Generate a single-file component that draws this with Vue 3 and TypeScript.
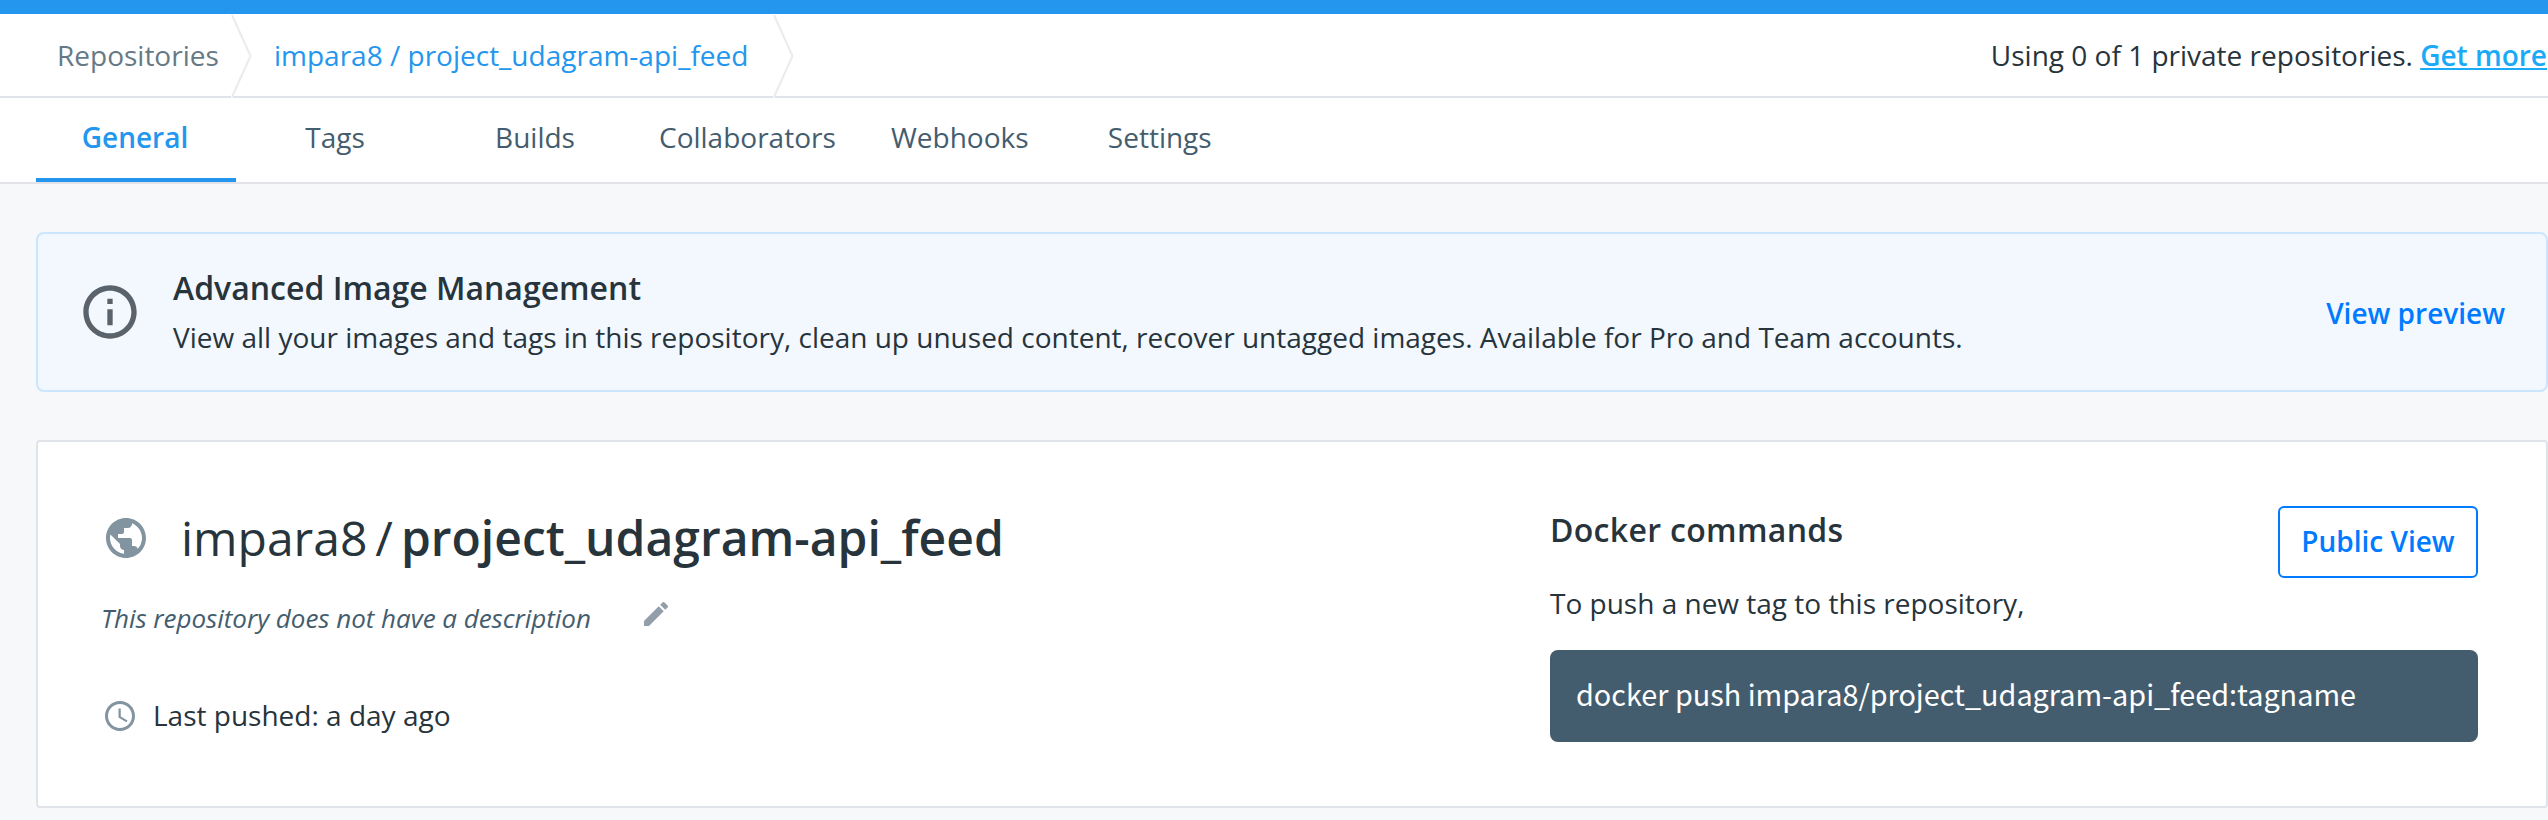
<script setup lang="ts">
import { ref } from 'vue'

const owner = 'impara8'
const repo = 'project_udagram-api_feed'
const tabs: string[] = ['General', 'Tags', 'Builds', 'Collaborators', 'Webhooks', 'Settings']
const active = ref<string>('General')
</script>

<template>
  <div class="page">
    <div class="topbar"></div>

    <header class="crumbs">
      <nav class="trail">
        <a class="crumb root">Repositories</a>
        <svg class="chevron" width="22" height="84" viewBox="0 0 22 84">
          <path d="M0 81h2v3H0z" fill="#fff" />
          <path d="M1 1 19.5 42 1 83" fill="none" stroke="#e9ebec" stroke-width="2" />
        </svg>
        <a class="crumb current">{{ owner }} / {{ repo }}</a>
        <svg class="chevron" width="22" height="84" viewBox="0 0 22 84">
          <path d="M0 81h2v3H0z" fill="#fff" />
          <path d="M1 1 19.5 42 1 83" fill="none" stroke="#e9ebec" stroke-width="2" />
        </svg>
      </nav>
      <p class="usage">Using 0 of 1 private repositories. <a class="more">Get more</a></p>
    </header>

    <nav class="tabs">
      <button
        v-for="tab in tabs"
        :key="tab"
        class="tab"
        :class="{ active: tab === active }"
        @click="active = tab"
      >{{ tab }}</button>
    </nav>

    <main class="content">
      <section class="banner">
        <svg class="info" width="64" height="64" viewBox="0 0 24 24" fill="#5a636b">
          <path d="M11 17h2v-6h-2v6zm1-15C6.48 2 2 6.48 2 12s4.48 10 10 10 10-4.48 10-10S17.52 2 12 2zm0 18c-4.41 0-8-3.59-8-8s3.59-8 8-8 8 3.59 8 8-3.59 8-8 8zM11 9h2V7h-2v2z" />
        </svg>
        <div class="message">
          <h2 class="banner-title">Advanced Image Management</h2>
          <p class="banner-text">View all your images and tags in this repository, clean up unused content, recover untagged images. Available for Pro and Team accounts.</p>
        </div>
        <a class="preview">View preview</a>
      </section>

      <section class="card">
        <div class="details">
          <div class="name-row">
            <svg class="globe" width="48" height="48" viewBox="0 0 24 24" fill="#8194a0">
              <path d="M12 2C6.48 2 2 6.48 2 12s4.48 10 10 10 10-4.48 10-10S17.52 2 12 2zm-1 17.93c-3.95-.49-7-3.85-7-7.93 0-.62.08-1.21.21-1.79L9 15v1c0 1.1.9 2 2 2v1.93zm6.9-2.54c-.26-.81-1-1.39-1.9-1.39h-1v-3c0-.55-.45-1-1-1H8v-2h2c.55 0 1-.45 1-1V7h2c1.1 0 2-.9 2-2v-.41c2.93 1.19 5 4.06 5 7.41 0 2.08-.8 3.97-2.1 5.39z" />
            </svg>
            <h1 class="name"><span>{{ owner }}</span><span class="slash">/</span><strong>{{ repo }}</strong></h1>
          </div>
          <div class="description-row">
            <em class="description">This repository does not have a description</em>
            <svg class="pencil" width="32" height="32" viewBox="0 0 24 24" fill="#929fab">
              <path d="M3 17.25V21h3.75L17.81 9.94l-3.75-3.75L3 17.25zM20.71 7.04c.39-.39.39-1.02 0-1.41l-2.34-2.34c-.39-.39-1.02-.39-1.41 0l-1.83 1.83 3.75 3.75 1.83-1.83z" />
            </svg>
          </div>
          <div class="pushed-row">
            <svg class="clock" width="36" height="36" viewBox="0 0 24 24" fill="#8194a0">
              <path d="M11.99 2C6.47 2 2 6.48 2 12s4.47 10 9.99 10C17.52 22 22 17.52 22 12S17.52 2 11.99 2zM12 20c-4.42 0-8-3.58-8-8s3.58-8 8-8 8 3.58 8 8-3.58 8-8 8z" />
              <path d="M12.5 7H11v6l5.25 3.15.75-1.23-4.5-2.67z" />
            </svg>
            <span class="pushed">Last pushed: a day ago</span>
          </div>
        </div>

        <div class="commands">
          <div class="commands-head">
            <div>
              <h3 class="commands-title">Docker commands</h3>
              <p class="commands-text">To push a new tag to this repository,</p>
            </div>
            <button class="public">Public View</button>
          </div>
          <code class="command">docker push {{ owner }}/{{ repo }}:tagname</code>
        </div>
      </section>
    </main>
  </div>
</template>

<style>
body {
  background: #f7f8fa;
  overflow: hidden;
}
</style>

<style scoped>
.page {
  width: 2548px;
  height: 820px;
  overflow: hidden;
  background: #f7f8fa;
  color: #27343c;
  font-family: 'Open Sans', 'Noto Sans', sans-serif;
  font-size: 28px;
  line-height: 38px;
  white-space: nowrap;
}
h1, h2, h3, p {
  margin: 0;
}
svg {
  display: block;
  flex: none;
}
button {
  font: inherit;
  cursor: pointer;
}

.topbar {
  height: 14px;
  background: #2496ed;
}

.crumbs {
  display: flex;
  justify-content: space-between;
  height: 82px;
  padding: 0 1px 0 57px;
  background: #fff;
  border-bottom: 2px solid #e0e4e8;
}
.trail {
  display: flex;
}
.crumb {
  padding-top: 22px;
}
.root {
  width: 174px;
  color: #677985;
}
.current {
  width: 499px;
  margin-left: 21px;
  color: #2496ed;
}
.usage {
  padding-top: 22px;
}
.more {
  color: #1aaaf8;
  font-weight: 600;
  text-decoration: underline;
  text-decoration-thickness: 2px;
  text-underline-offset: 2px;
}

.tabs {
  display: flex;
  height: 84px;
  padding-left: 36px;
  background: #fff;
  border-bottom: 2px solid #e1e3e6;
}
.tab {
  min-width: 200px;
  padding: 20px 25px 22px 23px;
  border: 0;
  border-bottom: 4px solid transparent;
  background: none;
  color: #445d6e;
}
.tab.active {
  border-bottom-color: #2496ed;
  color: #2496ed;
  font-weight: 600;
}

.content {
  padding: 48px 0 0 36px;
}
.banner {
  display: flex;
  box-sizing: border-box;
  height: 160px;
  padding: 0 41px 0 40px;
  border: 2px solid #cce5ff;
  border-radius: 8px;
  background: #f3f8ff;
}
.info {
  margin-top: 46px;
}
.message {
  flex: 1;
  margin-left: 31px;
  padding-top: 32px;
}
.banner-title {
  font-size: 32px;
  font-weight: 600;
  line-height: 43px;
}
.banner-text {
  margin-top: 9px;
}
.preview {
  margin-top: 60px;
  color: #007bff;
  font-weight: 600;
}

.card {
  display: flex;
  justify-content: space-between;
  box-sizing: border-box;
  height: 368px;
  margin-top: 48px;
  padding: 64px 68px 0 64px;
  border: 2px solid #e0e4e8;
  border-radius: 4px;
  background: #fff;
}
.name-row {
  display: flex;
  height: 92px;
}
.globe {
  margin-top: 8px;
}
.name {
  margin: -1px 0 0 31px;
  font-size: 48px;
  font-weight: 400;
  line-height: 65px;
}
.name strong {
  font-weight: 600;
}
.slash {
  margin: 0 8px;
}
.description-row {
  display: flex;
  height: 98px;
  margin-left: -1px;
}
.description {
  width: 539px;
  padding-top: 2px;
  color: #445d6e;
  font-size: 26px;
  line-height: 36px;
  letter-spacing: -0.03px;
}
.pushed-row {
  display: flex;
  gap: 15px;
}
.clock {
  margin-top: 2px;
}

.commands {
  width: 928px;
}
.commands-head {
  display: flex;
  justify-content: space-between;
  align-items: flex-start;
  height: 144px;
}
.commands-title {
  padding-top: 2px;
  font-size: 32px;
  font-weight: 600;
  line-height: 43px;
  letter-spacing: 0.32px;
}
.commands-text {
  margin-top: 33px;
}
.public {
  box-sizing: border-box;
  width: 200px;
  height: 72px;
  padding: 14px 0 16px;
  border: 2px solid #007bff;
  border-radius: 6px;
  background: #fff;
  color: #007bff;
  font-weight: 600;
}
.command {
  display: block;
  box-sizing: border-box;
  height: 92px;
  padding: 23px 26px 0;
  border-radius: 8px;
  background: #445d6e;
  color: #fff;
  font-family: 'Noto Sans CJK SC', sans-serif;
  font-size: 28.8px;
  line-height: 42px;
}
</style>
